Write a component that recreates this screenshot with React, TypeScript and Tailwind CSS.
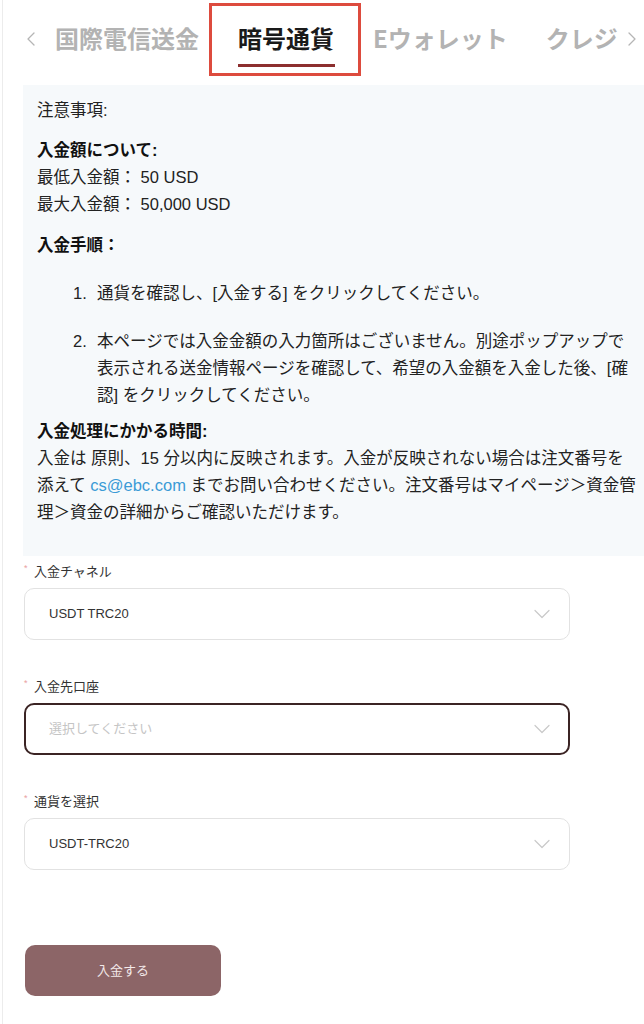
import React from "react";

const tabs = ["国際電信送金", "暗号通貨", "Eウォレット", "クレジ"];

function Chevron({ dir }: { dir: "left" | "right" }) {
  return (
    <svg width="10" height="16" viewBox="0 0 10 16" fill="none">
      <path
        d={dir === "left" ? "M8 2 L2 8 L8 14" : "M2 2 L8 8 L2 14"}
        stroke="#b5b5b5"
        strokeWidth="1.3"
        strokeLinecap="round"
        strokeLinejoin="round"
      />
    </svg>
  );
}

function SelectChevron() {
  return (
    <svg width="16" height="10" viewBox="0 0 16 10" fill="none">
      <path d="M1 1.5 L8 8.5 L15 1.5" stroke="#c9c9c9" strokeWidth="1.2" strokeLinecap="round" strokeLinejoin="round" />
    </svg>
  );
}

function Field({
  label,
  value,
  placeholder,
  active,
}: {
  label: string;
  value?: string;
  placeholder?: string;
  active?: boolean;
}) {
  return (
    <div className="flex flex-col">
      <div className="flex items-center h-[18px] text-[13px] text-[#333]">
        <span className="text-[#e9a0a0] text-[9px] w-[10px] -mt-[6px]">*</span>
        <span>{label}</span>
      </div>
      <div
        className={
          active
            ? "mt-[7px] w-[546px] h-[52px] rounded-[10px] border-2 border-[#3b2424] flex items-center justify-between pl-[23px] pr-[18px]"
            : "mt-[7px] w-[546px] h-[52px] rounded-[10px] border border-[#e2e2e2] flex items-center justify-between pl-[24px] pr-[19px]"
        }
      >
        {value ? (
          <span className="text-[13px] text-[#333]">{value}</span>
        ) : (
          <span className="text-[13px] text-[#c5c5c5]">{placeholder}</span>
        )}
        <SelectChevron />
      </div>
    </div>
  );
}

export default function App() {
  return (
    <div
      className="w-[644px] min-h-[1024px] bg-white pl-[2px] overflow-hidden"
      style={{ fontFamily: '"Liberation Sans", "Noto Sans CJK JP", sans-serif' }}
    >
      <div className="min-h-[1024px] border-l border-[#ececec]">
        {/* Tab bar */}
        <div className="relative flex h-[85px] -ml-[3px]" style={{ fontFamily: '"Noto Sans CJK JP", sans-serif' }}>
          <div className="w-[55px] pl-[26px] pt-[31px]">
            <Chevron dir="left" />
          </div>
          <div className="flex-1 min-w-0 overflow-hidden">
            <div className="flex gap-[38px] pt-[22px] whitespace-nowrap">
              {tabs.map((t, i) => (
                <div key={t} className={i === 1 ? "flex flex-col items-start ml-[1px]" : "flex flex-col items-start"}>
                  <span
                    className={
                      i === 1
                        ? "text-[24px] leading-[32px] font-bold text-[#1a1a1a]"
                        : "text-[24px] leading-[32px] font-bold text-[#b3b3b3]"
                    }
                  >
                    {t}
                  </span>
                  {i === 1 && <div className="mt-[10px] h-[3px] w-[97px] bg-[#8c2e2e]" />}
                </div>
              ))}
            </div>
          </div>
          <div className="w-[24px] pl-[7px] pt-[31px]">
            <Chevron dir="right" />
          </div>
          {/* annotation frame */}
          <div className="absolute left-[209px] top-[3px] w-[152px] h-[73px] border-[3px] border-[#dd4b3e] pointer-events-none" />
        </div>

        {/* Notes */}
        <div className="ml-[20px] bg-[#f6f9fb] pl-[14px] pr-[4px] pt-[12px] pb-[30px] text-[16.5px] leading-[27px] text-[#222] whitespace-nowrap">
          <p>注意事項:</p>
          <p className="mt-[13px] font-bold text-[#111]">入金額について:</p>
          <p>最低入金額： 50 USD</p>
          <p>最大入金額： 50,000 USD</p>
          <p className="mt-[14px] font-bold text-[#111]">入金手順：</p>
          <div className="mt-[21px] pl-[36px] flex flex-col gap-[21px]">
            <div className="flex">
              <span className="w-[24px] shrink-0">1.</span>
              <span>通貨を確認し、[入金する] をクリックしてください。</span>
            </div>
            <div className="flex">
              <span className="w-[24px] shrink-0">2.</span>
              <span>
                本ページでは入金金額の入力箇所はございません。別途ポップアップで
                <br />
                表示される送金情報ページを確認して、希望の入金額を入金した後、[確
                <br />
                認] をクリックしてください。
              </span>
            </div>
          </div>
          <p className="mt-[9px] font-bold text-[#111]">入金処理にかかる時間:</p>
          <p>
            入金は 原則、15 分以内に反映されます。入金が反映されない場合は注文番号を
            <br />
            添えて <span className="text-[#3b9bd6]">cs@ebc.com</span> までお問い合わせください。注文番号はマイページ＞資金管
            <br />
            理＞資金の詳細からご確認いただけます。
          </p>
        </div>

        {/* Form */}
        <div className="ml-[21px] pt-[7px] flex flex-col gap-[38px]">
          <Field label="入金チャネル" value="USDT TRC20" />
          <Field label="入金先口座" placeholder="選択してください" active />
          <Field label="通貨を選択" value="USDT-TRC20" />
        </div>

        <div className="ml-[22px] mt-[75px]">
          <button className="w-[196px] h-[51px] rounded-[10px] bg-[#8c6567] text-[13px] text-[#f3e9e9]">
            入金する
          </button>
        </div>
      </div>
    </div>
  );
}
